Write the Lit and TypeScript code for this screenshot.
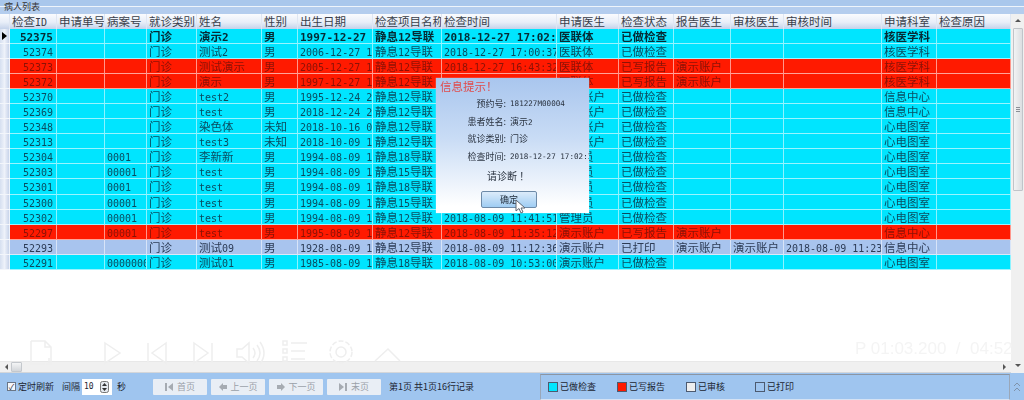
import { LitElement, html, css, svg } from 'lit';
import { customElement } from 'lit/decorators.js';

type Row = {
  id: string;
  caseNo?: string;
  name: string;
  sex: string;
  birth: string;
  item: string;
  time: string;
  doctor: string;
  status: string;
  reporter?: string;
  auditor?: string;
  auditTime?: string;
  dept: string;
  tone: 'cyan' | 'red' | 'blue';
  bold?: boolean;
};

const HEADERS = [
  '检查ID', '申请单号', '病案号', '就诊类别', '姓名', '性别', '出生日期', '检查项目名称',
  '检查时间', '申请医生', '检查状态', '报告医生', '审核医生', '审核时间', '申请科室', '检查原因',
];

const ROWS: Row[] = [
  { id: '52375', name: '演示2', sex: '男', birth: '1997-12-27', item: '静息12导联', time: '2018-12-27 17:02:37', doctor: '医联体', status: '已做检查', dept: '核医学科', tone: 'cyan', bold: true },
  { id: '52374', name: '测试2', sex: '男', birth: '2006-12-27 1', item: '静息12导联', time: '2018-12-27 17:00:37', doctor: '医联体', status: '已做检查', dept: '核医学科', tone: 'cyan' },
  { id: '52373', name: '测试演示', sex: '男', birth: '2005-12-27 1', item: '静息12导联', time: '2018-12-27 16:43:32', doctor: '医联体', status: '已写报告', reporter: '演示账户', dept: '核医学科', tone: 'red' },
  { id: '52372', name: '演示', sex: '男', birth: '1997-12-27 1', item: '静息12导联', time: '2018-12-27 16:40:12', doctor: '医联体', status: '已写报告', reporter: '演示账户', dept: '核医学科', tone: 'red' },
  { id: '52370', name: 'test2', sex: '男', birth: '1995-12-24 2', item: '静息12导联', time: '2018-12-24 15:20:11', doctor: '演示账户', status: '已做检查', dept: '信息中心', tone: 'cyan' },
  { id: '52369', name: 'test', sex: '男', birth: '2018-12-24 2', item: '静息12导联', time: '2018-12-24 15:02:44', doctor: '演示账户', status: '已做检查', dept: '信息中心', tone: 'cyan' },
  { id: '52348', name: '染色体', sex: '未知', birth: '2018-10-16 0', item: '静息12导联', time: '2018-10-16 10:12:08', doctor: '演示账户', status: '已做检查', dept: '心电图室', tone: 'cyan' },
  { id: '52313', name: 'test3', sex: '未知', birth: '2018-10-09 1', item: '静息12导联', time: '2018-10-09 14:30:25', doctor: '演示账户', status: '已做检查', dept: '心电图室', tone: 'cyan' },
  { id: '52304', caseNo: '0001', name: '李新新', sex: '男', birth: '1994-08-09 1', item: '静息18导联', time: '2018-08-09 11:55:02', doctor: '管理员', status: '已做检查', dept: '心电图室', tone: 'cyan' },
  { id: '52303', caseNo: '00001', name: 'test', sex: '男', birth: '1994-08-09 1', item: '静息15导联', time: '2018-08-09 11:50:40', doctor: '管理员', status: '已做检查', dept: '心电图室', tone: 'cyan' },
  { id: '52301', caseNo: '0001', name: 'test', sex: '男', birth: '1994-08-09 1', item: '静息18导联', time: '2018-08-09 11:47:13', doctor: '管理员', status: '已做检查', dept: '心电图室', tone: 'cyan' },
  { id: '52300', caseNo: '00001', name: 'test', sex: '男', birth: '1994-08-09 1', item: '静息15导联', time: '2018-08-09 11:44:09', doctor: '管理员', status: '已做检查', dept: '心电图室', tone: 'cyan' },
  { id: '52302', caseNo: '00001', name: 'test', sex: '男', birth: '1994-08-09 1', item: '静息12导联', time: '2018-08-09 11:41:51', doctor: '管理员', status: '已做检查', dept: '心电图室', tone: 'cyan' },
  { id: '52297', caseNo: '00001', name: 'test', sex: '男', birth: '1995-08-09 1', item: '静息12导联', time: '2018-08-09 11:35:12', doctor: '演示账户', status: '已写报告', reporter: '演示账户', dept: '信息中心', tone: 'red' },
  { id: '52293', name: '测试09', sex: '男', birth: '1928-08-09 1', item: '静息12导联', time: '2018-08-09 11:12:36', doctor: '演示账户', status: '已打印', reporter: '演示账户', auditor: '演示账户', auditTime: '2018-08-09 11:23:10', dept: '信息中心', tone: 'blue' },
  { id: '52291', caseNo: '00000001', name: '测试01', sex: '男', birth: '1985-08-09 1', item: '静息18导联', time: '2018-08-09 10:53:00', doctor: '演示账户', status: '已做检查', dept: '心电图室', tone: 'cyan' },
];

// latin digits are far narrower than the CJK text, so each run gets its own span
function runs(text: string = '') {
  const parts = text.match(/[\x20-\x7e]+|[^\x20-\x7e]+/g) ?? [];
  return parts.map((p) =>
    /^[\x20-\x7e]/.test(p) ? html`<span class="latin">${p}</span>` : html`<span>${p}</span>`
  );
}

@customElement('app-root')
export class AppRoot extends LitElement {
  static styles = css`
    :host {
      display: block;
      width: 1024px;
      height: 400px;
      overflow: hidden;
      background: #fff;
      font-family: 'Noto Sans CJK SC', 'Liberation Sans', sans-serif;
      font-size: 11.5px;
    }
    .page {
      position: relative;
      width: 1024px;
      height: 400px;
      display: flex;
      flex-direction: column;
      filter: blur(0.35px);
    }
    .caption {
      height: 14px;
      flex: none;
      padding-left: 4px;
      font-size: 9px;
      line-height: 13px;
      color: #333;
      background: linear-gradient(#a9c7ec 0 6px, #eef4fb 6px 7px, #b4cdee 7px 14px);
    }
    .body {
      flex: 1;
      min-height: 0;
      display: flex;
    }
    .left {
      flex: 1;
      min-width: 0;
      display: flex;
      flex-direction: column;
    }
    .table {
      flex: 1;
      min-height: 0;
    }
    .row {
      display: grid;
      grid-template-columns: 10px 47px 48px 42px 50px 65px 36px 75px 69px 115px 62px 55px 57px 53px 98px 55px 74px;
      width: 1011px;
      height: 15.06px;
    }
    .row.head {
      height: 15px;
      background: linear-gradient(#fafbfe, #e8eef8 55%, #c4d2ea);
      color: #3a3f4a;
    }
    .cell {
      overflow: hidden;
      white-space: nowrap;
      padding-left: 2px;
      box-sizing: border-box;
      line-height: 14px;
      border-right: 1px solid rgba(255, 255, 255, 0.55);
      border-bottom: 1px solid rgba(255, 255, 255, 0.6);
    }
    .head .cell {
      border-bottom: 0;
      border-right: 1px solid #dfe6f2;
    }
    .cell.num {
      text-align: right;
      padding: 0 3px 0 0;
    }
    .latin {
      font-family: 'DejaVu Sans Mono', 'Liberation Mono', monospace;
      font-size: 10px;
    }
    .gutter {
      padding: 0;
      background: linear-gradient(90deg, #d5dff0, #eef2fa 50%, #c8d4ea);
      border-bottom: 1px solid #f3f6fb;
      display: flex;
      align-items: center;
      justify-content: center;
    }
    .gutter i {
      width: 0;
      height: 0;
      border-left: 5px solid #000;
      border-top: 4px solid transparent;
      border-bottom: 4px solid transparent;
    }
    .head .gutter {
      background: none;
    }
    .cyan .cell:not(.gutter) {
      background: #00e5ff;
      color: #0a4c60;
    }
    .red .cell:not(.gutter) {
      background: #ff1a00;
      color: #8a1206;
    }
    .blue .cell:not(.gutter) {
      background: #a8c4ee;
      color: #2c3b55;
    }
    .row.bold .cell:not(.gutter) {
      color: #062a34;
      font-weight: 700;
    }
    .bold .latin {
      font-size: 11px;
    }
    .hbar {
      height: 12px;
      flex: none;
      background: #f0f0f0;
      border-top: 1px solid #e8e8e8;
      border-bottom: 1px solid #d4d6d9;
      box-sizing: border-box;
      display: flex;
      align-items: center;
      justify-content: space-between;
      padding: 0 5px;
    }
    .thumb-h {
      width: 11px;
      height: 10px;
      margin-left: 3px;
      margin-right: auto;
      border: 1px solid #c4c8cd;
      box-sizing: border-box;
      background: linear-gradient(#f4f5f6, #d3d6da);
      border-radius: 1px;
    }
    .arrow-l {
      border-right: 3px solid #555;
      border-top: 3px solid transparent;
      border-bottom: 3px solid transparent;
    }
    .arrow-r {
      border-left: 3px solid #555;
      border-top: 3px solid transparent;
      border-bottom: 3px solid transparent;
    }
    .vbar {
      width: 13px;
      flex: none;
      background: #f0f0f0;
      display: flex;
      flex-direction: column;
      align-items: center;
      padding: 5px 0 0 1px;
      box-sizing: border-box;
    }
    .arrow-u {
      border-bottom: 3px solid #555;
      border-left: 3px solid transparent;
      border-right: 3px solid transparent;
    }
    .arrow-d {
      border-top: 3px solid #555;
      border-left: 3px solid transparent;
      border-right: 3px solid transparent;
      margin-bottom: 6px;
    }
    .thumb-v {
      width: 10px;
      height: 163px;
      margin-top: 6px;
      margin-bottom: auto;
      box-sizing: border-box;
      border: 1px solid #c0c4c9;
      border-radius: 1px;
      background: linear-gradient(90deg, #f2f3f4, #dcdee1);
      display: flex;
      flex-direction: column;
      justify-content: center;
      align-items: center;
      gap: 1px;
    }
    .thumb-v b {
      width: 4px;
      height: 1px;
      background: #8a8f96;
    }
    .foot {
      height: 27px;
      flex: none;
      display: flex;
      align-items: center;
      background: #9fc5ef;
      font-size: 9px;
      color: #1c2430;
      white-space: nowrap;
    }
    .tools {
      width: 540px;
      flex: none;
      display: flex;
      align-items: center;
      padding-left: 7px;
      box-sizing: border-box;
    }
    .check {
      width: 9px;
      height: 9px;
      box-sizing: border-box;
      border: 1px solid #6a7686;
      background: #f4f7fb;
      display: flex;
      align-items: center;
      justify-content: center;
      font-size: 8px;
      line-height: 8px;
      color: #223;
      margin-right: 2px;
    }
    .spin {
      width: 30px;
      height: 16px;
      margin: 0 5px 0 2px;
      background: #fff;
      display: flex;
      align-items: center;
      justify-content: space-between;
      padding: 0 3px 0 2px;
      box-sizing: border-box;
    }
    .spin .latin {
      font-size: 8px;
    }
    .spin svg {
      display: block;
    }
    .gap-8 {
      margin-left: 8px;
    }
    .pager {
      display: flex;
      gap: 4px;
      margin-left: 27px;
      margin-right: 8px;
    }
    .pager button {
      width: 54px;
      height: 16px;
      padding: 0;
      border: 0;
      border-radius: 1px;
      background: #e9eef5;
      color: #9aa0a8;
      font: inherit;
      display: flex;
      align-items: center;
      justify-content: center;
      gap: 4px;
    }
    .legend {
      width: 470px;
      height: 26px;
      box-sizing: border-box;
      border: 1px solid #9aa7b8;
      border-top-color: #8b95a3;
      border-bottom-color: #d5e2f3;
      display: grid;
      grid-template-columns: 69px 69px 69px 1fr;
      align-items: center;
      padding-left: 7px;
    }
    .legend span {
      display: flex;
      align-items: center;
      gap: 2px;
    }
    .legend i {
      width: 10px;
      height: 10px;
      box-sizing: border-box;
      border: 1px solid #4c5a70;
    }
    .chev {
      flex: 1;
      display: flex;
      justify-content: center;
    }
    .dialog {
      position: absolute;
      left: 436px;
      top: 78px;
      width: 153px;
      height: 135px;
      box-sizing: border-box;
      padding: 1px 0 0 4px;
      overflow: hidden;
      background: linear-gradient(#a9c6ee, #c9dcf5 45%, #ffffff 95%);
      box-shadow: 0 0 1px #cfd9e8;
      font-size: 9px;
      color: #2a3340;
      white-space: nowrap;
    }
    .dialog h1 {
      margin: 0 0 1px;
      font-size: 11.5px;
      line-height: 15px;
      font-weight: 400;
      color: #e04b4b;
    }
    .info {
      display: grid;
      grid-template-columns: 66px 1fr;
      grid-auto-rows: 17.5px;
      align-items: center;
      column-gap: 4px;
    }
    .info b {
      font-weight: 400;
      text-align: right;
    }
    .info .latin {
      font-size: 7.6px;
    }
    .ask {
      margin: 4px 0 0 47px;
      font-size: 10px;
      line-height: 14px;
    }
    .ok {
      display: block;
      width: 56px;
      height: 17px;
      margin: 8px 0 0 41px;
      padding: 0;
      border: 1px solid #6d8aa8;
      border-radius: 2px;
      background: linear-gradient(#dcebfa, #9fcdf3);
      font: inherit;
      color: #1e2a38;
    }
    .cursor {
      position: absolute;
      left: 515px;
      top: 199px;
    }
    .ghost {
      position: absolute;
      left: 0;
      top: 0;
      pointer-events: none;
    }
    .clock {
      position: absolute;
      left: 855px;
      top: 337px;
      font: 17px 'Liberation Sans', sans-serif;
      line-height: 24px;
      color: #f4f4f4;
      white-space: pre;
    }
  `;

  renderRow(r: Row) {
    return html`
      <div class="row ${r.tone} ${r.bold ? 'bold' : ''}">
        <div class="cell gutter">${r.bold ? html`<i></i>` : ''}</div>
        <div class="cell num">${runs(r.id)}</div>
        <div class="cell"></div>
        <div class="cell">${runs(r.caseNo)}</div>
        <div class="cell">门诊</div>
        <div class="cell">${runs(r.name)}</div>
        <div class="cell">${r.sex}</div>
        <div class="cell">${runs(r.birth)}</div>
        <div class="cell">${runs(r.item)}</div>
        <div class="cell">${runs(r.time)}</div>
        <div class="cell">${r.doctor}</div>
        <div class="cell">${r.status}</div>
        <div class="cell">${r.reporter}</div>
        <div class="cell">${r.auditor}</div>
        <div class="cell">${runs(r.auditTime)}</div>
        <div class="cell">${r.dept}</div>
        <div class="cell"></div>
      </div>
    `;
  }

  // the faint player controls burnt into the capture
  renderGhost() {
    return html`
      <svg class="ghost" width="1024" height="400" fill="none" stroke="#eeeeee" stroke-width="1.5">
        ${svg`
          <path d="M31 341h14l6 6v18M31 341v23h14M45 341v6h6M46 364h6M49 358v7" />
          <path d="M105 343l15 10-15 10z" />
          <path d="M148 343v20M166 343l-14 10 14 10z" />
          <path d="M194 343l14 10-14 10zM212 343v20" />
          <path d="M237 349h5l7-6v20l-7-6h-5zM253 348q4 5 0 10M257 345q6 8 0 16M260 342q8 11 0 22" />
          <path d="M283 341h4v4h-4zM283 349h4v4h-4zM283 357h4v4h-4zM291 343h16M291 351h14M291 359h14" />
          <circle cx="341" cy="352" r="5" />
          <circle cx="341" cy="352" r="11" stroke-dasharray="5 2" />
          <path d="M375 361l13-12 12 12" />
        `}
      </svg>
      <div class="clock">P 01:03.200  /  04:52</div>
    `;
  }

  render() {
    return html`
      <div class="page">
        <div class="caption">病人列表</div>
        <div class="body">
          <div class="left">
            <div class="table">
              <div class="row head">
                <div class="cell gutter"></div>
                ${HEADERS.map((h) => html`<div class="cell">${runs(h)}</div>`)}
              </div>
              ${ROWS.map((r) => this.renderRow(r))}
            </div>
            <div class="hbar">
              <div class="arrow-l"></div>
              <div class="thumb-h"></div>
              <div class="arrow-r"></div>
            </div>
          </div>
          <div class="vbar">
            <div class="arrow-u"></div>
            <div class="thumb-v"><b></b><b></b><b></b></div>
            <div class="arrow-d"></div>
          </div>
        </div>
        <div class="foot">
          <div class="tools">
            <div class="check">✓</div>
            <span>定时刷新</span>
            <span class="gap-8">间隔</span>
            <div class="spin">
              <span class="latin">10</span>
              <svg width="9" height="12" viewBox="0 0 9 12">
                <rect x="0.5" y="0.5" width="8" height="11" rx="2" fill="#e4e8ee" stroke="#777" />
                <path d="M2 5l2.5-3L7 5zM2 7l2.5 3L7 7z" fill="#333" />
              </svg>
            </div>
            <span>秒</span>
            <div class="pager">
              <button>
                <svg width="8" height="8"><path d="M0 0h2v8H0zM8 0v8L3 4z" fill="#a6abb2" /></svg>首页
              </button>
              <button>
                <svg width="8" height="8"><path d="M4 0v8L0 4zM4 2h4v4H4z" fill="#a6abb2" /></svg>上一页
              </button>
              <button>
                <svg width="8" height="8"><path d="M0 2h4V0l4 4-4 4V6H0z" fill="#a6abb2" /></svg>下一页
              </button>
              <button>
                <svg width="8" height="8"><path d="M0 0l5 4-5 4zM6 0h2v8H6z" fill="#a6abb2" /></svg>末页
              </button>
            </div>
            <span>第1页 共1页16行记录</span>
          </div>
          <div class="legend">
            <span><i style="background:#00e5ff"></i>已做检查</span>
            <span><i style="background:#ff1a00"></i>已写报告</span>
            <span><i style="background:#eeeeee"></i>已审核</span>
            <span><i></i>已打印</span>
          </div>
          <div class="chev">
            <svg width="8" height="10" fill="none" stroke="#7f93ab">
              <path d="M1 4l3-3 3 3M1 9l3-3 3 3" />
            </svg>
          </div>
        </div>
        ${this.renderGhost()}
        <div class="dialog">
          <h1>信息提示！</h1>
          <div class="info">
            <b>预约号:</b><span class="latin">181227M00004</span>
            <b>患者姓名:</b><span>演示<span class="latin">2</span></span>
            <b>就诊类别:</b><span>门诊</span>
            <b>检查时间:</b><span class="latin">2018-12-27 17:02:37</span>
          </div>
          <div class="ask">请诊断 ！</div>
          <button class="ok">确定</button>
        </div>
        <svg class="cursor" width="12" height="15" viewBox="0 0 12 15">
          <path d="M1 1v11l3-2.5 2 4.5 2-1-2-4h4z" fill="#fff" stroke="#5c6470" />
        </svg>
      </div>
    `;
  }
}

declare global {
  interface HTMLElementTagNameMap {
    'app-root': AppRoot;
  }
}
